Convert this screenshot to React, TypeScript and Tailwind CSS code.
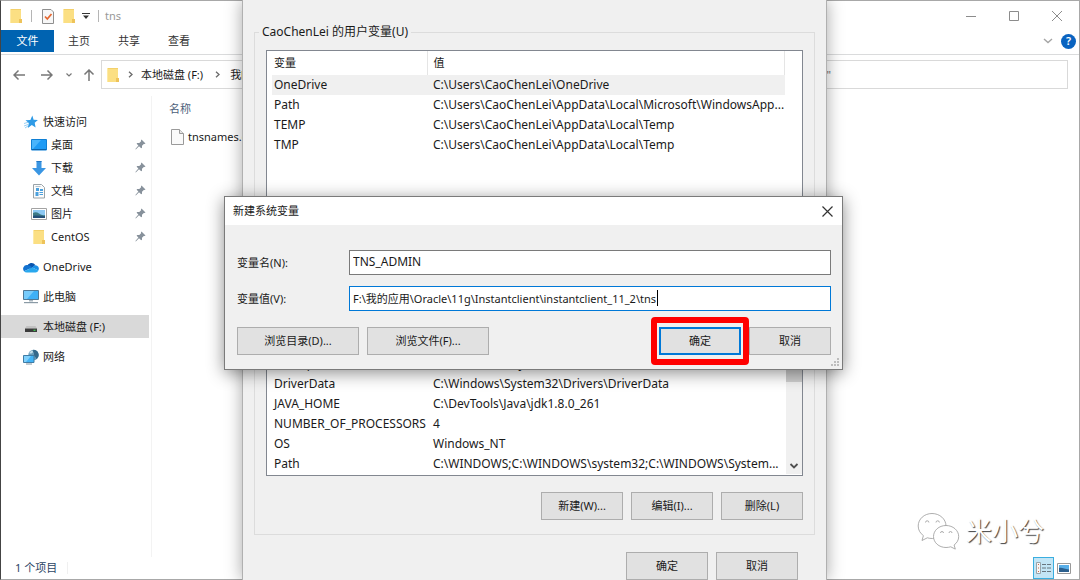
import { useState } from 'react'
import type { ReactNode } from 'react'
import clsx from 'clsx'

interface Variable {
  name: string
  value: string
}

const userVariables: Variable[] = [
  { name: 'OneDrive', value: 'C:\\Users\\CaoChenLei\\OneDrive' },
  { name: 'Path', value: 'C:\\Users\\CaoChenLei\\AppData\\Local\\Microsoft\\WindowsApp...' },
  { name: 'TEMP', value: 'C:\\Users\\CaoChenLei\\AppData\\Local\\Temp' },
  { name: 'TMP', value: 'C:\\Users\\CaoChenLei\\AppData\\Local\\Temp' },
]

const systemVariables: Variable[] = [
  { name: 'ComSpec', value: 'C:\\WINDOWS\\system32\\cmd.exe' },
  { name: 'DriverData', value: 'C:\\Windows\\System32\\Drivers\\DriverData' },
  { name: 'JAVA_HOME', value: 'C:\\DevTools\\Java\\jdk1.8.0_261' },
  { name: 'NUMBER_OF_PROCESSORS', value: '4' },
  { name: 'OS', value: 'Windows_NT' },
  { name: 'Path', value: 'C:\\WINDOWS;C:\\WINDOWS\\system32;C:\\WINDOWS\\System...' },
]

function FolderIcon() {
  return (
    <svg width="14" height="16" viewBox="0 0 14 16" className="shrink-0">
      <path d="M1 1h11v10l1 1v3H1z" fill="#fbdf83" />
      <path d="M1 1h11v1H1z" fill="#f3d06b" />
      <path d="M10 11h3v4h-3z" fill="#eec35a" />
      <path d="M1 1h1v14H1z" fill="#fdeaa6" />
    </svg>
  )
}

function PageIcon() {
  return (
    <svg width="13" height="16" viewBox="0 0 13 16" className="shrink-0">
      <path d="M.5 .5h8l4 4v11H.5z" fill="#fafafa" stroke="#9a9a9a" />
      <path d="M8.500 .5v4h4" fill="#e6e6e6" stroke="#9a9a9a" />
    </svg>
  )
}

function CheckPageIcon() {
  return (
    <svg width="12" height="16" viewBox="0 0 12 16">
      <path d="M.5 1.500h8.500l2.500 2.500v11.500H.5z" fill="#f7f7f7" stroke="#8f8f8f" />
      <path d="M3 8.500l2.300 2.500L9.500 6" fill="none" stroke="#e4662f" strokeWidth="1.700" />
    </svg>
  )
}

function StarIcon() {
  return (
    <svg width="14" height="14" viewBox="0 0 14 14">
      <path d="M8.300 .6l1.300 4.100 4.300.3-3.200 2.800.9 4.800-3.800-2.500-4 2.800 1-4.800L1.500 5.300l4.900-.3z" fill="#2f9be6" />
      <path d="M0 8.500l4-1.200M0 11l4-1.500M1 13l3-2" stroke="#7cc3f2" strokeWidth=".8" />
    </svg>
  )
}

function DesktopIcon() {
  return (
    <svg width="16" height="14" viewBox="0 0 16 14">
      <path d="M.5 1.500h15v10.500H.5z" fill="#1e9bf5" stroke="#0f7fd4" />
      <path d="M1 2h9L2 11H1z" fill="#49b4fb" />
      <path d="M1 11h14v1H1z" fill="#0a63ad" />
    </svg>
  )
}

function DownloadIcon() {
  return (
    <svg width="16" height="16" viewBox="0 0 16 16">
      <path d="M5.500 1h5v7H15l-7 7.500L1 8h4.500z" fill="#3a96e3" />
      <path d="M5.500 1h5v1h-5z" fill="#2277c4" />
    </svg>
  )
}

function DocumentIcon() {
  return (
    <svg width="16" height="16" viewBox="0 0 16 16">
      <path d="M2.500 1.500h8l3 3v10.500h-11z" fill="#fbfbfb" stroke="#9aa3a8" />
      <path d="M5 5h3v3H5zM9 6h3v2H9zM4.500 9h3v4h-3zM8.500 9H12v1H8.500zM8.500 11H12v1H8.500z" fill="#4aa0dd" />
      <path d="M4.500 3h5v1h-5z" fill="#b4c4cf" />
    </svg>
  )
}

function PictureIcon() {
  return (
    <svg width="16" height="12" viewBox="0 0 16 12">
      <path d="M.5 .5h15v11H.5z" fill="#fff" stroke="#a3a3a3" />
      <path d="M2 2h12v8H2z" fill="#8cc8f3" />
      <path d="M2 5c2-1.200 4-1 6 .5s4 2 6 1.500v3H2z" fill="#3d7a86" />
      <path d="M2 8c4-1 8 0 12 .3V10H2z" fill="#234f79" />
    </svg>
  )
}

function OneDriveIcon() {
  return (
    <svg width="16" height="12" viewBox="0 0 16 12">
      <path d="M4 5.500A4.600 4.600 0 0 1 12.300 4L8 8z" fill="#0a55ae" />
      <path d="M3.800 4A3.800 3.800 0 0 0 1 10.200L9.500 6.500 6.600 4.600A4 4 0 0 0 3.800 4z" fill="#1272d0" />
      <path d="M12 4.200a3.400 3.400 0 0 1 3.300 5.200L9.300 6.500A4 4 0 0 1 12 4.200z" fill="#1b8fe6" />
      <path d="M1 10.200A3.600 3.600 0 0 0 3.800 11.500h8.700a3.200 3.200 0 0 0 2.900-2.100L9.400 6.400z" fill="#29a8ee" />
    </svg>
  )
}

function ComputerIcon() {
  return (
    <svg width="16" height="15" viewBox="0 0 16 15">
      <path d="M.5 1.500h15v9H.5z" fill="#3eb0f7" stroke="#4f7896" />
      <path d="M1 2h10L4 10H1z" fill="#77cbfb" />
      <path d="M6 11h4v1.500H6z" fill="#a9b6bf" />
      <path d="M1 13h14v1.200H1z" fill="#8b9ba6" />
    </svg>
  )
}

function DriveIcon() {
  return (
    <svg width="14" height="13" viewBox="0 0 14 13">
      <path d="M2.500 6h9L13 8.500H1z" fill="#c2c2c2" />
      <path d="M1 8.500h12V12H1z" fill="#3c3c3c" />
      <path d="M9.500 9.700h2v1.200h-2z" fill="#3fd452" />
    </svg>
  )
}

function NetworkIcon() {
  return (
    <svg width="16" height="16" viewBox="0 0 16 16">
      <circle cx="10.500" cy="6" r="5.200" fill="#6a9dba" />
      <path d="M10.500 .8a5.200 5.200 0 0 1 3 9.400c-1-3-3-3-2.500-5S9 3 10.500 .8z" fill="#35698b" />
      <path d="M6.500 3.500c1.500-2 3-2 3.500-1s-1.500 2.500-3.500 2z" fill="#c5deea" />
      <path d="M.5 6.500h10.500v7H.5z" fill="#43b3f6" stroke="#3f7ca5" />
      <path d="M1 7h7l-5 6H1z" fill="#80d0fb" />
      <path d="M3 14.500h6v1H3z" fill="#8497a3" />
    </svg>
  )
}

function PinIcon() {
  return (
    <svg width="11" height="11" viewBox="0 0 11 11" className="mr-[3px]">
      <path d="M6.500 0.500L10.500 4.500 9.500 5 8.800 4.900 7 6.800 7 8.800 6.200 9.300 4 7.200 .8 10.400 .4 10 3.400 6.600 1.600 4.700 2.200 4 4.300 3.900 6.100 2.200 6 1.200z" fill="#87919b" />
    </svg>
  )
}

function Chevron({ className }: { className?: string }) {
  return (
    <svg width="5" height="7" viewBox="0 0 5 7" className={className}>
      <path d="M1 .8L4 3.500 1 6.200" fill="none" stroke="#6a6a6a" strokeWidth="1.300" />
    </svg>
  )
}

interface NavItemProps {
  icon: ReactNode
  label: string
  nested?: boolean
  active?: boolean
}

function NavItem({ icon, label, nested, active }: NavItemProps) {
  return (
    <a
      href="#"
      className={clsx('flex h-[23px] items-center gap-1', nested ? 'pl-[30px]' : 'pl-[22px]', active && 'bg-[#d9d9d9]')}
    >
      <span className="flex w-4 justify-center">{icon}</span>
      <span className="flex-1">{label}</span>
      {nested && <PinIcon />}
    </a>
  )
}

function Explorer() {
  return (
    <div className="flex h-full flex-col border border-[#a8a8a8] border-l-[#444] bg-white">
      <header className="flex h-[29px] shrink-0 items-center pl-2 text-[#999]">
        <FolderIcon />
        <span className="ml-2 h-3 w-px bg-[#b5b5b5]" />
        <span className="ml-2.5"><CheckPageIcon /></span>
        <span className="ml-2"><FolderIcon /></span>
        <svg width="8" height="8" viewBox="0 0 8 8" className="ml-1.5">
          <path d="M0 1h8v1H0zM1 3.500h6L4 7z" fill="#333" />
        </svg>
        <span className="ml-2 h-3 w-px bg-[#b5b5b5]" />
        <span className="ml-1.5 flex-1">tns</span>
        <button aria-label="最小化" className="flex w-[43px] justify-center">
          <svg width="10" height="10" viewBox="0 0 10 10"><path d="M0 5.500h10" stroke="#8c8c8c" /></svg>
        </button>
        <button aria-label="最大化" className="flex w-[43px] justify-center">
          <svg width="10" height="10" viewBox="0 0 10 10"><path d="M.5 .5h9v9h-9z" fill="none" stroke="#8c8c8c" /></svg>
        </button>
        <button aria-label="关闭" className="mr-px flex w-[43px] justify-center">
          <svg width="10" height="10" viewBox="0 0 10 10"><path d="M0 0l10 10M10 0L0 10" stroke="#8c8c8c" /></svg>
        </button>
      </header>

      <nav className="flex h-[25px] shrink-0 items-start border-b border-[#dadbdc] text-[#333]">
        <button className="h-[22px] w-[53px] bg-[#0063b1] text-white">文件</button>
        <button className="h-[22px] w-[50px]">主页</button>
        <button className="h-[22px] w-[50px]">共享</button>
        <button className="h-[22px] w-[50px]">查看</button>
        <div className="ml-auto flex h-[22px] items-center gap-2 pr-[3px]">
          <svg width="10" height="6" viewBox="0 0 10 6">
            <path d="M1 1l4 3.500L9 1" fill="none" stroke="#a5a5a5" strokeWidth="1.400" />
          </svg>
          <button aria-label="帮助" className="flex size-[15px] items-center justify-center rounded-full bg-[#0a63c0] font-semibold text-white">
            ?
          </button>
        </div>
      </nav>

      <div className="mt-[5px] flex h-[29px] shrink-0 items-center pr-[11px]">
        <div className="flex w-[100px] items-center pl-3">
          <svg width="12" height="12" viewBox="0 0 12 12"><path d="M12 6H1M5.500 1.500L1 6l4.500 4.500" fill="none" stroke="#777" strokeWidth="1.500" /></svg>
          <svg width="12" height="12" viewBox="0 0 12 12" className="ml-4"><path d="M0 6h11M6.500 1.500L11 6l-4.500 4.500" fill="none" stroke="#777" strokeWidth="1.500" /></svg>
          <svg width="8" height="6" viewBox="0 0 8 6" className="ml-3"><path d="M1.500 1.500L4 4l2.500-2.500" fill="none" stroke="#777" strokeWidth="1.200" /></svg>
          <svg width="12" height="12" viewBox="0 0 12 12" className="ml-2.5"><path d="M6 12V1M1.500 5.500L6 1l4.500 4.500" fill="none" stroke="#777" strokeWidth="1.500" /></svg>
        </div>
        <div className="flex h-full flex-1 items-center border border-[#d9d9d9] pl-1">
          <FolderIcon />
          <Chevron className="ml-2" />
          <span className="ml-2">本地磁盘 (F:)</span>
          <Chevron className="ml-3" />
          <span className="ml-2.5">我的应用</span>
          <span className="ml-auto pr-[236px] text-[#6d6d6d]">"</span>
        </div>
      </div>

      <div className="mt-[7px] flex min-h-0 flex-1">
        <aside className="w-[151px] shrink-0 border-r border-[#f3f3f3] pt-3.5">
          <div className="mr-[2px] flex flex-col gap-[7px]">
            <div>
              <NavItem icon={<StarIcon />} label="快速访问" />
              <NavItem nested icon={<DesktopIcon />} label="桌面" />
              <NavItem nested icon={<DownloadIcon />} label="下载" />
              <NavItem nested icon={<DocumentIcon />} label="文档" />
              <NavItem nested icon={<PictureIcon />} label="图片" />
              <NavItem nested icon={<FolderIcon />} label="CentOS" />
            </div>
            <NavItem icon={<OneDriveIcon />} label="OneDrive" />
            <NavItem icon={<ComputerIcon />} label="此电脑" />
            <NavItem active icon={<DriveIcon />} label="本地磁盘 (F:)" />
            <NavItem icon={<NetworkIcon />} label="网络" />
          </div>
        </aside>
        <main className="flex-1 px-[17px] pt-[5px]">
          <div className="text-[#4c607a]">名称</div>
          <div className="mt-2.5 flex h-5 items-center gap-1 pl-0.5">
            <PageIcon />
            <span>tnsnames.ora</span>
          </div>
        </main>
      </div>

      <footer className="flex h-[22px] shrink-0 items-center pl-3.5 pr-2 text-[#2b4464]">
        <span>1 个项目</span>
        <span className="ml-2.5 h-3 w-px bg-[#f0f0f0]" />
        <button aria-label="详细信息" className="ml-auto flex h-full w-[21px] items-center justify-center border border-[#3aaee0] bg-[#c3e5f5]">
          <svg width="17" height="14" viewBox="0 0 17 14">
            <path d="M1.500 1.500h4v11h-4z" fill="#f5f5f5" stroke="#98a4ab" />
            <path d="M3 3h1v1H3zM3 6.500h1v1H3zM3 10h1v1H3z" fill="#cf6844" />
            <path d="M7 3.500h4M12 3.500h4M7 7h4M12 7h4M7 10.500h4M12 10.500h4" stroke="#68767f" />
          </svg>
        </button>
        <button aria-label="大图标" className="ml-[3px]">
          <svg width="14" height="11" viewBox="0 0 14 11">
            <path d="M.5 .5h13v10H.5z" fill="#fff" stroke="#999" />
            <path d="M2 2h10v7H2z" fill="#58aee8" />
            <path d="M2 5c3-1 5 1 10 1.500V9H2z" fill="#2c5f8d" />
          </svg>
        </button>
      </footer>
    </div>
  )
}

function DialogButton({ children, wide, primary }: { children: ReactNode; wide?: boolean; primary?: boolean }) {
  return (
    <button
      className={clsx(
        'h-7 bg-[#e1e1e1]',
        wide ? 'w-[122px]' : 'w-[82px]',
        primary ? 'border-2 border-[#0078d7]' : 'border border-[#adadad]',
      )}
    >
      {children}
    </button>
  )
}

function VariableTable({ rows, selected }: { rows: Variable[]; selected?: number }) {
  return (
    <table className="w-full table-fixed text-left">
      <thead>
        <tr className="h-6">
          <th className="w-[155px] border-r border-[#e5e5e5] pl-0.5 font-normal">变量</th>
          <th className="border-r border-[#e5e5e5] pl-1.5 font-normal">值</th>
        </tr>
      </thead>
      <tbody className="text-[12px]">
        {rows.map((row, i) => (
          <tr key={row.name} className={clsx('h-5', i === selected && 'bg-[#f0f0f0]')}>
            <td className="whitespace-nowrap pl-0.5">{row.name}</td>
            <td className="whitespace-nowrap pl-1.5">{row.value}</td>
          </tr>
        ))}
      </tbody>
    </table>
  )
}

function VariableGroup({ title, children }: { title: string; children: ReactNode }) {
  return (
    <fieldset className="border border-[#dcdcdc] px-1 pb-3.5">
      <legend className="h-5 px-[3px] text-[12px] leading-5">{title}</legend>
      <div className="mx-[7px] mt-2">{children}</div>
      <div className="mx-[7px] mt-4 flex justify-end gap-2">
        <DialogButton>新建(W)...</DialogButton>
        <DialogButton>编辑(I)...</DialogButton>
        <DialogButton>删除(L)</DialogButton>
      </div>
    </fieldset>
  )
}

function EnvironmentDialog() {
  return (
    <section className="absolute inset-y-0 left-[242px] right-[253px] overflow-hidden border-x border-[#b0b0b0] bg-[#f0f0f0] px-[11px] pt-[22px] shadow-[0_0_16px_rgba(0,0,0,0.35)]">
      <div className="flex flex-col gap-[7px]">
        <VariableGroup title="CaoChenLei 的用户变量(U)">
          <div className="h-[185px] border border-[#828790] bg-white pl-[5px] pr-[17px]">
            <VariableTable rows={userVariables} selected={0} />
          </div>
        </VariableGroup>
        <VariableGroup title="系统变量(S)">
          <div className="flex border border-[#828790] bg-white pb-px pl-[5px]">
            <div className="min-w-0 flex-1">
              <VariableTable rows={systemVariables} />
            </div>
            <div className="flex w-4 flex-col justify-between bg-[#f0f0f0]">
              <div className="h-[52px] bg-[#cdcdcd]" />
              <svg width="16" height="16" viewBox="0 0 16 16">
                <path d="M4.500 6L8 9.500 11.500 6" fill="none" stroke="#505050" strokeWidth="1.800" />
              </svg>
            </div>
          </div>
        </VariableGroup>
      </div>
      <div className="mr-[17px] mt-[17px] flex justify-end gap-2">
        <DialogButton>确定</DialogButton>
        <DialogButton>取消</DialogButton>
      </div>
    </section>
  )
}

function NewVariableDialog() {
  const [name, setName] = useState('TNS_ADMIN')
  const [value, setValue] = useState('F:\\我的应用\\Oracle\\11g\\Instantclient\\instantclient_11_2\\tns')

  return (
    <section className="absolute left-[224px] right-[237px] top-[196px] border border-[#7a7a7a] bg-[#f0f0f0] shadow-[0_3px_16px_rgba(0,0,0,0.45)]">
      <header className="flex h-7 items-center justify-between bg-white pl-2 pr-[9px]">
        <h2>新建系统变量</h2>
        <button aria-label="关闭">
          <svg width="11" height="11" viewBox="0 0 11 11"><path d="M.5 .5l10 10M10.500 .5l-10 10" stroke="#333" strokeWidth="1.200" /></svg>
        </button>
      </header>
      <div className="pb-3.5 pl-3 pr-[11px] pt-[25px]">
        <div className="flex items-center">
          <label htmlFor="var-name" className="w-28">变量名(N):</label>
          <input
            id="var-name"
            value={name}
            onChange={(e) => setName(e.target.value)}
            className="h-[25px] min-w-0 flex-1 border border-[#7a7a7a] bg-white px-[3px] pb-0.5 text-[12px] outline-none"
          />
        </div>
        <div className="mt-[11px] flex items-center">
          <label htmlFor="var-value" className="w-28">变量值(V):</label>
          <div className="relative flex-1">
            <input
              id="var-value"
              value={value}
              onChange={(e) => setValue(e.target.value)}
              className="h-[25px] w-full border border-[#0078d7] bg-white px-[3px] pb-0.5 caret-transparent outline-none"
            />
            <span className="absolute left-[308px] top-1 h-4 w-px bg-black" />
          </div>
        </div>
        <div className="mt-4 flex gap-2">
          <DialogButton wide>浏览目录(D)...</DialogButton>
          <DialogButton wide>浏览文件(F)...</DialogButton>
          <div className="relative z-10 ml-auto">
            <DialogButton primary>确定</DialogButton>
            <span className="pointer-events-none absolute -inset-x-2 -inset-y-2.5 rounded-sm border-[6px] border-[#ff0000]" />
          </div>
          <DialogButton>取消</DialogButton>
        </div>
      </div>
      <svg width="9" height="9" viewBox="0 0 9 9" className="absolute bottom-0.5 right-0.5">
        <path d="M6 0h2v2H6zM3 3h2v2H3zM6 3h2v2H6zM0 6h2v2H0zM3 6h2v2H3zM6 6h2v2H6z" fill="#bdbdbd" />
      </svg>
    </section>
  )
}

function Watermark() {
  return (
    <div className="pointer-events-none absolute bottom-[30px] right-9 flex items-center gap-1.5">
      <svg width="43" height="38" viewBox="0 0 43 38" fill="#fff" stroke="#999" strokeWidth=".8">
        <path d="M15 1.500C7.300 1.500 1.200 7 1.200 14c0 4 2 7.300 5.200 9.600L5 28.500l5.300-2.700c1.700.5 3.300.7 5.200.7C23.500 26.500 29 21 29 14S22.700 1.500 15 1.500z" />
        <path d="M29 13.500c-7 0-12.500 4.900-12.500 11S22 35.500 29 35.500c1.700 0 3.200-.3 4.700-.7l4.600 2.300-1.200-4.100c2.800-2 4.600-5 4.600-8.500 0-6.100-5.700-11-12.700-11z" />
        <path d="M8.500 10.500a1.700 1.700 0 0 1 3.400 0M19 10.500a1.700 1.700 0 0 1 3.400 0M23.500 21a1.500 1.500 0 0 1 3 0M32 21a1.500 1.500 0 0 1 3 0" />
      </svg>
      <span className="text-[26px] leading-9 text-white [text-shadow:1px_1px_1px_#444]">米小兮</span>
    </div>
  )
}

export default function App() {
  return (
    <div className="relative h-screen w-full overflow-hidden font-['Noto_Sans','Noto_Sans_CJK_SC',sans-serif] text-[11px] leading-4 text-[#1a1a1a]">
      <Explorer />
      <EnvironmentDialog />
      <NewVariableDialog />
      <Watermark />
    </div>
  )
}
